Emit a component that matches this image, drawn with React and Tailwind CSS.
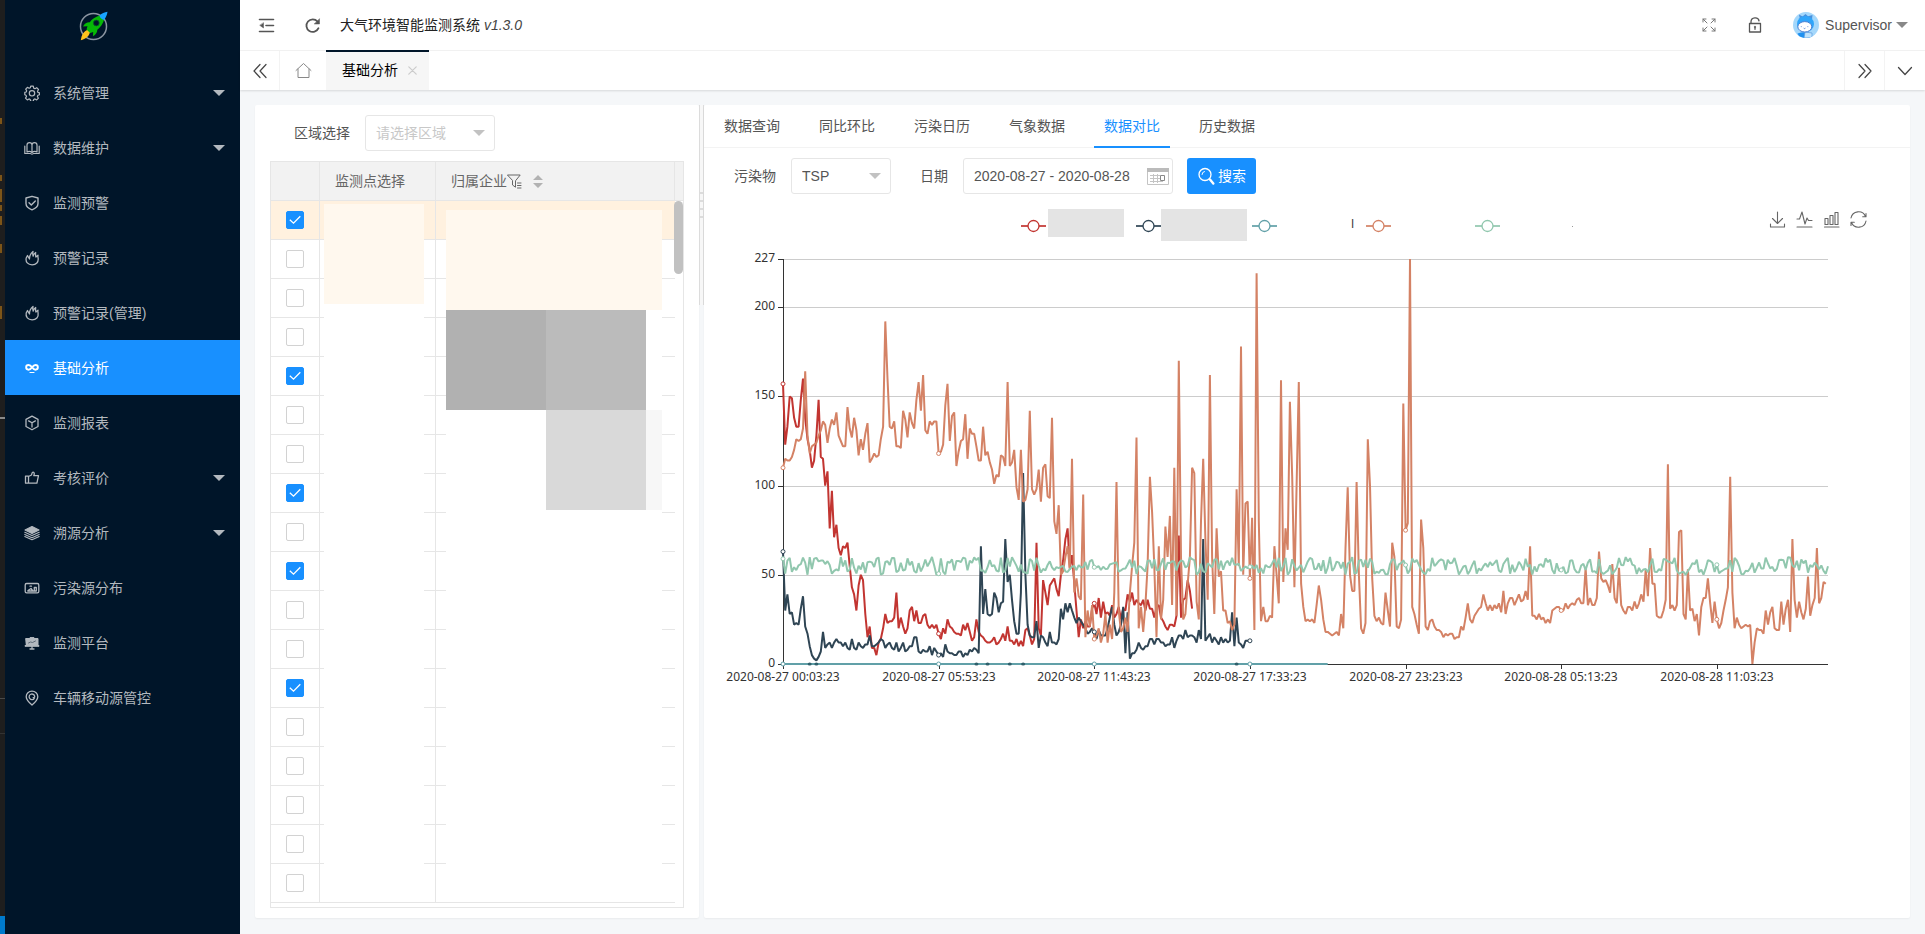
import React from "react";

/* ---------- icons ---------- */

function Icon({ size = 16, box = 16, width = 1.2, children, className = "" }) {
  return (
    <svg
      width={size}
      height={size}
      viewBox={`0 0 ${box} ${box}`}
      fill="none"
      stroke="currentColor"
      strokeWidth={width}
      strokeLinecap="round"
      strokeLinejoin="round"
      className={`shrink-0 ${className}`}
      aria-hidden="true"
    >
      {children}
    </svg>
  );
}

const Gear = () => (
  <Icon>
    <path d="M6.7 1.2h2.6l.4 1.9 1.3.6 1.7-1 1.8 1.8-1 1.7.5 1.2 1.5.5v1.9l-1.6.5-.5 1.2 1 1.7-1.7 1.7-1.7-1-1.3.6-.4 1.8H6.7l-.5-1.8-1.2-.6-1.7 1-1.8-1.8 1-1.6-.5-1.3L.8 9.700V7.400l1.400-.4.500-1.200-1-1.700 1.700-1.800 1.700 1 1.200-.5z" />
    <circle cx="8" cy="8.300" r="2.700" />
  </Icon>
);
const Book = () => (
  <Icon>
    <path d="M3 12V5c0-1.500 1-2.300 2.500-2.300S8 3.500 8 5c0-1.500 1-2.300 2.500-2.300S13 3.500 13 5v7c-1.800-.9-3.600-.6-5 .5-1.400-1.100-3.200-1.400-5-.5zM8 5v7.500M.8 6v7.500h5.700c.5.700 2.500.7 3 0h5.700V6" />
  </Icon>
);
const Shield = () => (
  <Icon width={1.4}>
    <path d="M8 1.300 14 3v5.500c0 3-2.500 5-6 6.300-3.500-1.300-6-3.300-6-6.300V3zM5 7.700l2.300 2.300L11.300 6" />
  </Icon>
);
const Fire = () => (
  <Icon width={1.3}>
    <path d="M5.500 9C5.300 6 6.300 3.700 9 1.500c-.4 1.800-.3 3.300.2 4.700.2-1.400 1-2.700 2.500-3.700-.3 1.700-.2 3 .2 4.500L14 5.200c-.3 1-.1 1.700.1 2.800.7 4.300-2 6.800-6 6.800-4.200 0-6.700-2.700-5.900-6.800L3.500 5.500c.6 1 1.100 2.200 2 3.500z" />
  </Icon>
);
const Infinity = () => (
  <Icon width={1.9}>
    <path d="M8 7.300C6.800 5.500 5.800 5 4.500 5a2.300 2.300 0 0 0 0 4.700C6 9.700 7 8.600 8 7.300s2-2.300 3.500-2.300a2.300 2.300 0 0 1 0 4.700C10.200 9.700 9.200 9 8 7.300z" />
    <path d="M6 12.500h4" strokeWidth="1.200" />
  </Icon>
);
const Cube = () => (
  <Icon width={1.3}>
    <path d="M8 1.200 14 4.300v7.200L8 14.800 2 11.500V4.300zM4.600 5.900 8 7.800l3.400-1.900M8 7.800v4.200" />
  </Icon>
);
const Thumb = () => (
  <Icon width={1.3}>
    <path d="M1.500 6.200h3v7h-3zM4.500 6.500 7.500 5c.6-1.400.3-2.900 1.600-2.900 1.400 0 1.400 1.900.7 3.600h4.700l-1.600 7.500H4.500" />
  </Icon>
);
const Layers = () => (
  <Icon width={1.1}>
    <path d="M8 1.500 15 5 8 8.500 1 5z" fill="currentColor" />
    <path d="M.8 7.200 8 10.600l7.200-3.400M.8 9.400 8 12.700l7.200-3.300M.8 11.500 8 14.800l7.200-3.300" />
  </Icon>
);
const Photo = () => (
  <Icon width={1.3}>
    <rect x="1.200" y="3.500" width="13.600" height="9.400" rx="1.400" />
    <path d="M3.800 11h8.500V7.500h-2v3M4 10.500l3-2 1.500 2M6 6.200h1.500" />
  </Icon>
);
const Board = () => (
  <Icon width={1}>
    <path d="M2 3.500h4V2.600h4v.9h4v7h1v.8H1v-.8h1z" fill="currentColor" />
    <path d="M8 11v2.800M6 14h4" strokeWidth="1.300" />
    <path d="m4.500 8 2-1L8.500 7.500l3-1.500" stroke="#4a5866" strokeWidth=".8" />
  </Icon>
);
const Pin = () => (
  <Icon width={1.300}>
    <path d="M8 15C4.500 12 2.200 9.500 2.200 6.700a5.800 5.500 0 0 1 11.600 0C13.800 9.500 11.500 12 8 15z" />
    <path d="M10.300 8.300a2.800 2.800 0 1 1 .4-1.800c0 1-.8 1.400-1.500 1.100" />
  </Icon>
);

const Caret = ({ className = "" }) => (
  <svg width="12" height="6" viewBox="0 0 12 6" className={`shrink-0 ${className}`} aria-hidden="true">
    <path d="M0 0h12L6 6z" fill="currentColor" />
  </svg>
);

const Logo = () => (
  <svg width="30" height="30" viewBox="0 0 30 30" aria-hidden="true">
    <circle cx="14.500" cy="15.500" r="13" fill="none" stroke="#8b95a1" strokeWidth="1.500" />
    <path d="M9.500 18.500C4 20.500 2.500 24.500 1.800 29.200c4.700-1.500 8.400-3.700 9.200-8.300z" fill="#ffc21c" />
    <path d="M20.500 4.500c-4 1.200-7.800 3.700-9.700 6.800-2.500-.3-5 1-6.800 4.200l4.500-.3-1 3.300 3.700 3.500 3-1-.3 4.200c3-1.600 4.400-3.900 4.400-6.500 3-2.300 5.600-6 6.700-9.800z" fill="#06b806" />
    <path d="M28.500.8c-3 .4-5.700 1.700-8 3.700.2 2 2 4 4.500 4.400 2-2.400 3.100-5.100 3.500-8.100z" fill="#18a4ff" />
    <circle cx="17.300" cy="12" r="2.900" fill="#001529" stroke="#075d24" strokeWidth=".8" />
  </svg>
);

const Avatar = () => (
  <svg width="26" height="26" viewBox="0 0 26 26" className="shrink-0" aria-hidden="true">
    <defs>
      <clipPath id="avatar-clip">
        <circle cx="13" cy="13" r="13" />
      </clipPath>
    </defs>
    <g clipPath="url(#avatar-clip)">
      <rect width="26" height="26" fill="#a4d7fb" />
      <path d="m6 2.500 3.500 2 3-2.500 2.500 2.300 4.500-1.300-.5 4-12 1z" fill="#4a90dc" />
      <ellipse cx="12.500" cy="12" rx="8.500" ry="8" fill="#2fa5fa" />
      <path d="M4.500 21.500c5-1.800 11-1.500 14.500.5v4H7z" fill="#1e90f0" />
      <path d="m12 20 7 1v5h-8z" fill="#bfe2fb" stroke="#5a9be0" strokeWidth=".7" />
      <ellipse cx="11.800" cy="14.800" rx="7" ry="5.200" fill="#fff" stroke="#4c7fd0" strokeWidth="1" />
      <path d="M8.300 14.300v.8M14.800 14.300v.8M10.700 16.200c.5.500 1.200.5 1.700 0" stroke="#4c7fd0" strokeWidth=".9" fill="none" />
    </g>
  </svg>
);

/* ---------- sidebar ---------- */

const MENU = [
  { label: "系统管理", icon: Gear, sub: true },
  { label: "数据维护", icon: Book, sub: true },
  { label: "监测预警", icon: Shield },
  { label: "预警记录", icon: Fire },
  { label: "预警记录(管理)", icon: Fire },
  { label: "基础分析", icon: Infinity, active: true },
  { label: "监测报表", icon: Cube },
  { label: "考核评价", icon: Thumb, sub: true },
  { label: "溯源分析", icon: Layers, sub: true },
  { label: "污染源分布", icon: Photo },
  { label: "监测平台", icon: Board },
  { label: "车辆移动源管控", icon: Pin },
];

function EdgeStrip() {
  return (
    <div className="relative w-[5px] shrink-0 bg-[#1e1e1e]" aria-hidden="true">
      <i className="absolute left-0 top-[118px] h-[6px] w-[2px] bg-[#7d5518]" />
      <i className="absolute left-0 top-[175px] h-[6px] w-[2px] bg-[#7d5518]" />
      <i className="absolute left-0 top-[189px] h-[13px] w-[2px] bg-[#7d5518]" />
      <i className="absolute left-0 top-[205px] h-[6px] w-[2px] bg-[#7d5518]" />
      <i className="absolute left-0 top-[216px] h-[9px] w-[2px] bg-[#7d5518]" />
      <i className="absolute left-0 top-[244px] h-[9px] w-[2px] bg-[#7d5518]" />
      <i className="absolute left-0 top-[306px] h-[13px] w-[2px] bg-[#7d5518]" />
      <i className="absolute left-0 top-[417px] h-[2px] w-[5px] bg-[#8a8a8a]" />
      <i className="absolute left-0 top-[698px] h-px w-[5px] bg-[#4a4a4a]" />
      <i className="absolute left-0 top-[733px] h-px w-[5px] bg-[#333333]" />
      <i className="absolute bottom-0 left-0 h-[18px] w-[5px] bg-[#007acc]" />
    </div>
  );
}

function Sidebar() {
  return (
    <aside className="w-[235px] shrink-0 bg-[#001529]">
      <div className="flex h-[65px] items-start pl-[74px] pt-[11px]">
        <Logo />
      </div>
      <nav>
        {MENU.map(({ label, icon: Glyph, sub, active }) => (
          <a
            key={label}
            href="#"
            className={
              active
                ? "flex h-[55px] items-center bg-[#1890ff] pl-[19px] pr-[15px] text-sm text-white"
                : "flex h-[55px] items-center pl-[19px] pr-[15px] text-sm text-[#b3b9bf]"
            }
          >
            <Glyph />
            <span className="ml-[13px] flex-1">{label}</span>
            {sub && <Caret />}
          </a>
        ))}
      </nav>
    </aside>
  );
}

/* ---------- header ---------- */

function Header() {
  return (
    <header className="flex h-[51px] items-center border-b border-[#f3f3f3] bg-white pl-[18px] pr-[17px] text-[#555]">
      <button type="button" aria-label="收起菜单" className="mr-[29px]">
        <Icon size={17} box={17} width={1.600}>
          <path d="M1.500 2.500h14M8 8.500h7.500M1.500 14.500h14" />
          <path d="M5.500 6v5L2 8.500z" fill="currentColor" strokeWidth=".5" />
        </Icon>
      </button>
      <button type="button" aria-label="刷新" className="mr-[19px]">
        <Icon size={17} box={17} width={1.800}>
          <path d="M14.500 11.200A6.300 6.300 0 1 1 13.500 4.500" />
          <path d="M15.500 2v5h-5z" fill="currentColor" strokeWidth=".5" />
        </Icon>
      </button>
      <h1 className="text-sm text-[#222]">
        大气环境智能监测系统 <em className="text-[#444]">v1.3.0</em>
      </h1>
      <div className="ml-auto flex items-center">
        <button type="button" aria-label="全屏" className="mr-[31px] text-[#777]">
          <Icon size={14} box={14} width={1}>
            <path d="M1 4V1h3M1 1l4 4M10 1h3v3M13 1 9 5M1 10v3h3M1 13l4-4M13 10v3h-3M13 13 9 9" />
          </Icon>
        </button>
        <button type="button" aria-label="锁屏" className="mr-[30px]">
          <Icon size={16} box={16} width={1.300}>
            <path d="M2.500 6.500h11v8.500h-11zM4 6.500V4.800c0-5 7.500-5 8-.9M8 9.500v2.800M7.500 10h1" />
          </Icon>
        </button>
        <button type="button" className="flex items-center text-sm text-[#555]">
          <Avatar />
          <span className="ml-[6px]">Supervisor</span>
          <Caret className="ml-[4px] text-[#888]" />
        </button>
      </div>
    </header>
  );
}

function TabBar() {
  return (
    <div className="relative flex h-[39px] items-stretch bg-white text-[#444] shadow-[0_1px_2px_rgba(0,0,0,0.12)]">
      <button type="button" aria-label="向左" className="grid w-[40px] place-items-center border-r border-[#f3f3f3]">
        <Icon size={16} box={16}>
          <path d="M8 1.500 2 8l6 6.500M14 1.500 8 8l6 6.500" />
        </Icon>
      </button>
      <button type="button" aria-label="主页" className="grid w-[46px] place-items-center text-[#888]">
        <Icon size={17} box={17} width={1}>
          <path d="M1 8.500 8.500 1.500 16 8.500M3 7v8.500h11V7" />
        </Icon>
      </button>
      <div className="-mt-px flex items-center border-t-2 border-[#001529] bg-[#f6f6f6] pb-[2px] pl-[16px] pr-[12px] text-sm text-black">
        基础分析
        <button type="button" aria-label="关闭" className="ml-[10px] text-[#ccc]">
          <Icon size={9} box={9}>
            <path d="m.8.8 7.400 7.400M8.200.8.800 8.200" />
          </Icon>
        </button>
      </div>
      <button type="button" aria-label="向右" className="ml-auto grid w-[40px] place-items-center border-l border-[#f3f3f3]">
        <Icon size={16} box={16}>
          <path d="m2 1.500 6 6.500-6 6.500M8 1.500 14 8l-6 6.500" />
        </Icon>
      </button>
      <button type="button" aria-label="更多" className="grid w-[41px] place-items-center border-l border-[#f3f3f3]">
        <Icon size={16} box={16} width={1.300}>
          <path d="m1.500 4.500 6.500 7 6.500-7" />
        </Icon>
      </button>
    </div>
  );
}

/* ---------- station list ---------- */

const ROWS = 18;
const CHECKED = [0, 4, 7, 9, 12];

function StationTable() {
  return (
    <div className="relative border border-[#e6e6e6] pb-[4px]">
      <table className="w-full table-fixed border-separate border-spacing-0 text-sm text-[#666]">
        <colgroup>
          <col className="w-[49px]" />
          <col className="w-[116px]" />
          <col />
          <col className="w-[8px]" />
        </colgroup>
        <thead className="bg-[#f2f2f2]">
          <tr className="h-[39px]">
            <th className="border-b border-r border-[#e6e6e6]" aria-label="选择" />
            <th className="border-b border-r border-[#e6e6e6] pl-[15px] text-left font-normal">监测点选择</th>
            <th className="border-b border-r border-[#e6e6e6] pl-[15px] text-left font-normal">
              <span className="flex items-center">
                归属企业
                <Icon size={15} box={15} width={1}>
                  <path d="M.8 1h12.400L8.500 6.800v6.400L5.500 11V6.800zM10.500 9h3.500M10.500 11.500h3.500M10.500 14h3.500" />
                </Icon>
                <svg width="10" height="13" viewBox="0 0 10 13" className="ml-[11px]" aria-hidden="true">
                  <path d="M5 0l5 5H0zM5 13L0 8h10z" fill="#b2b2b2" />
                </svg>
              </span>
            </th>
            <th className="border-b border-[#e6e6e6]" aria-hidden="true" />
          </tr>
        </thead>
        <tbody>
          {Array.from({ length: ROWS }, (_, r) => (
            <tr key={r} className={r === 0 ? "h-[39px] bg-[#fff1df]" : "h-[39px] bg-white"}>
              <td className="border-b border-r border-[#e6e6e6] p-0">
                <label className="relative mx-auto block size-[18px]">
                  <input
                    type="checkbox"
                    aria-label={`第${r + 1}行`}
                    defaultChecked={CHECKED.includes(r)}
                    className="peer block size-[18px] appearance-none rounded-[2px] border border-[#d2d2d2] bg-white checked:border-[#1890ff] checked:bg-[#1890ff]"
                  />
                  <svg
                    viewBox="0 0 18 18"
                    className="pointer-events-none absolute inset-0 hidden size-[18px] peer-checked:block"
                    fill="none"
                    stroke="#fff"
                    strokeWidth="1.300"
                  >
                    <path d="m3.800 8.800 3.700 3.400L14.300 5.300" />
                  </svg>
                </label>
              </td>
              <td className="border-b border-r border-[#e6e6e6]" />
              <td className="border-b border-[#e6e6e6]" />
              <td className="bg-white" />
            </tr>
          ))}
        </tbody>
      </table>
      {/* masked cells */}
      <div className="absolute bottom-[7px] left-[53px] top-[42px] w-[100px] bg-white">
        <div className="h-[100px] bg-[#fff8ee]" />
      </div>
      <div className="absolute bottom-[7px] left-[175px] top-[48px] w-[216px] bg-white">
        <div className="h-[100px] bg-[#fff8ee]" />
        <div className="flex h-[100px]">
          <div className="w-[100px] bg-[#b1b1b1]" />
          <div className="w-[100px] bg-[#bbbbbb]" />
        </div>
        <div className="flex h-[100px]">
          <div className="ml-[100px] w-[100px] bg-[#d9d9d9]" />
          <div className="flex-1 bg-[#f7f7f7]" />
        </div>
      </div>
      <div className="absolute right-0 top-[39px] h-[73px] w-[9px] rounded-full bg-[#c1c1c1]" />
    </div>
  );
}

function StationPanel() {
  return (
    <section className="w-[444px] shrink-0 rounded-[2px] bg-white px-[15px] py-[10px] shadow-[0_1px_2px_rgba(0,0,0,0.05)]">
      <div className="mb-[10px] flex items-center pl-[24px] text-sm">
        <label htmlFor="area" className="mr-[15px] text-[#555]">
          区域选择
        </label>
        <span className="relative w-[130px]">
          <select
            id="area"
            defaultValue=""
            className="block h-[36px] w-full appearance-none rounded-[3px] border border-[#e6e6e6] bg-white px-[10px] text-[#c8c8c8]"
          >
            <option value="">请选择区域</option>
          </select>
          <Caret className="pointer-events-none absolute right-[10px] top-[15px] text-[#c2c2c2]" />
        </span>
      </div>
      <StationTable />
    </section>
  );
}

function Splitter() {
  return (
    <div className="w-[5px] shrink-0" aria-hidden="true">
      <div className="flex h-[200px] flex-col items-stretch gap-[6px] border-x border-[#dcdcdc] bg-[#f7f7f7] pt-[87px]">
        <i className="h-[2px] bg-[#dcdcdc]" />
        <i className="h-[2px] bg-[#dcdcdc]" />
        <i className="h-[2px] bg-[#dcdcdc]" />
        <i className="h-[2px] bg-[#dcdcdc]" />
      </div>
    </div>
  );
}

/* ---------- chart ---------- */

const parse = (text) => text.trim().split(/\s+/).map(Number);

// One reading every five minutes, beginning at 2020-08-27 00:03:23.
const RED = parse(`
157 123 133 150 149 138 133 133 148 160 138 126 120 110 114 128 148 116 115 100 108 76 97 71 78 65 61 66 65 68
55 43 39 30 44 50 47 28 15 21 9 9 5 12 14 20 28 23 24 24 26 40 20 26 21 17 20 30 32 24
30 23 23 27 28 22 20 22 20 22 17 14 20 17 25 21 20 18 17 17 16 22 19 23 18 13 15 25 18 16
15 13 12 12 13 15 11 12 14 17 13 21 13 13 11 14 10 13 10 19 20 16 11 14 68 20 16 47 40 33
44 46 48 42 38 50 58 70 76 54 61 45 30 15 25 20 24 21 21 31 34 28 37 26 35 28 29 27 33 26
28 32 25 31 30 39 35 40 33 36 34 33 36 30 36 31 31 26 32 33 26 24 21 19 22 22 21 27 72 26
36 37 47 41 31`);

const NAVY = parse(`
63 30 39 28 29 22 23 22 31 38 21 17 10 5 3 2 4 7 18 9 11 12 9 12 14 12 12 10 12 9
8 14 9 8 12 10 9 11 11 16 10 10 11 12 14 13 9 11 12 9 8 12 7 9 12 7 8 10 10 15
15 7 6 8 7 7 10 5 9 7 5 6 4 11 7 6 6 5 5 7 7 4 6 5 8 7 9 8 6 66
28 42 28 27 28 40 37 29 34 35 70 46 50 36 24 17 17 40 107 50 22 16 15 15 24 9 16 15 12 10
18 12 12 11 14 31 25 34 29 34 30 26 23 26 24 22 20 17 18 20 18 14 19 16 16 16 20 26 32 22
16 18 22 32 6 29 3 6 6 8 12 9 8 10 10 14 14 11 14 14 12 12 10 11 11 15 9 13 16 16
14 19 15 16 16 15 12 19 14 70 13 15 17 12 15 13 11 15 12 14 12 13 29 10 26 12 11 9 13 13 13`);

const ORANGE = parse(`
110 115 114 114 116 120 126 125 126 132 164 128 118 122 123 124 128 131 136 134 124 132 137 134 141 128 125 122 122 144
132 127 138 131 117 126 120 129 135 113 115 118 116 117 126 133 192 160 133 132 136 122 122 121 142 137 127 141 135 132
148 158 142 162 131 129 136 134 136 136 118 119 123 145 157 125 139 141 111 119 125 126 140 115 132 129 129 122 114 114
133 117 119 113 109 101 106 105 117 116 111 158 111 113 120 99 92 120 91 92 98 142 98 95 98 109 91 110 112 94
93 138 80 73 89 50 52 60 66 53 115 40 48 38 36 95 15 30 21 33 14 16 20 12 17 28 12 22 14 40
102 30 18 20 26 18 40 55 68 127 20 32 18 33 55 105 85 55 15 66 25 36 77 60 83 33 110 27 170 60
25 28 45 60 110 107 35 25 80 115 70 36 162 60 28 76 49 52 30 30 23 24 19 22 98 55 178 50 90 91
48 82 19 219 80 24 32 24 24 27 26 66 50 34 159 46 76 64 147 105 43 100 158 45 32 24 25 24 25 23
33 44 36 25 18 18 17 16 17 18 16 28 20 65 99 50 41 41 102 50 20 17 23 126 100 48 27 24 26 23
22 40 30 21 68 60 21 20 25 146 75 79 227 32 28 22 17 81 65 21 19 24 25 21 19 19 18 15 17 16
17 17 14 15 15 21 19 26 34 25 23 27 29 31 32 39 34 30 33 30 33 31 34 29 41 28 34 37 37 33
36 39 35 36 41 36 66 27 27 25 28 25 26 23 25 23 30 31 32 32 30 30 34 31 33 34 33 36 37 34
34 54 33 37 33 33 37 63 48 46 47 44 40 56 37 34 54 33 30 28 32 32 30 35 31 34 39 35 53 38
65 45 45 27 26 26 30 36 112 31 33 30 33 74 75 28 25 53 30 31 24 28 16 32 37 37 48 34 23 35
25 20 23 30 36 43 105 40 20 26 22 20 21 22 21 22 0 12 20 19 19 17 30 22 29 32 20 19 19 35
22 31 36 18 70 36 26 35 29 25 31 49 27 33 37 65 34 37 46 45`);

// The background station hovers between 50 and 60 for the whole period.
const MINT = (() => {
  const out = [59];
  let seed = 20200827;
  for (let i = 1; i <= 470; i += 1) {
    seed = (seed * 48271) % 2147483647;
    const target = 50 + (seed / 2147483647) * 10;
    out.push(i % 5 === 0 ? (out[i - 1] + target) / 2 : target);
  }
  return out;
})();

const TEAL = Array.from({ length: 246 }, () => 0);

const SERIES = [
  { color: "#c23531", values: RED },
  { color: "#2f4554", values: NAVY },
  { color: "#61a0a8", values: TEAL },
  { color: "#d48265", values: ORANGE },
  { color: "#91c7ae", values: MINT },
];

const PLOT = { left: 79, top: 16, width: 1045, height: 405, slots: 470, max: 227 };
const px = (slot) => PLOT.left + (slot / PLOT.slots) * PLOT.width;
const py = (value) => PLOT.top + PLOT.height * (1 - value / PLOT.max);

const Y_TICKS = [0, 50, 100, 150, 200, 227];
const X_TICKS = [
  "2020-08-27 00:03:23",
  "2020-08-27 05:53:23",
  "2020-08-27 11:43:23",
  "2020-08-27 17:33:23",
  "2020-08-27 23:23:23",
  "2020-08-28 05:13:23",
  "2020-08-28 11:03:23",
];

function Chart() {
  const bottom = PLOT.top + PLOT.height;
  return (
    <svg viewBox="0 0 1206 450" className="block w-full" role="img" aria-label="数据对比">
      <g shapeRendering="crispEdges">
        {Y_TICKS.slice(1).map((v) => (
          <rect key={v} x={PLOT.left} y={Math.round(py(v))} width={PLOT.width} height="1" fill="#ccc" />
        ))}
        <rect x={PLOT.left} y={PLOT.top} width="1" height={PLOT.height} fill="#333" />
        <rect x={PLOT.left} y={bottom} width={PLOT.width} height="1" fill="#333" />
        {Y_TICKS.map((v) => (
          <rect key={v} x={PLOT.left - 5} y={Math.round(py(v))} width="5" height="1" fill="#333" />
        ))}
        {X_TICKS.map((t, i) => (
          <rect key={t} x={Math.round(px(i * 70))} y={bottom} width="1" height="5" fill="#333" />
        ))}
      </g>
      <g fontSize="12" fill="#333" fontFamily='"Noto Sans", sans-serif'>
        {Y_TICKS.map((v) => (
          <text key={v} x={PLOT.left - 8} y={Math.round(py(v)) + 3} textAnchor="end">
            {v}
          </text>
        ))}
        {X_TICKS.map((t, i) => (
          <text key={t} x={Math.round(px(i * 70))} y={bottom + 17} textAnchor="middle">
            {t}
          </text>
        ))}
      </g>
      {SERIES.map(({ color, values }) => (
        <polyline
          key={color}
          fill="none"
          stroke={color}
          strokeWidth="2"
          strokeLinejoin="bevel"
          points={values.map((v, i) => `${px(i).toFixed(1)},${py(v).toFixed(1)}`).join(" ")}
        />
      ))}
      {[12, 15, 87, 92, 102, 108, 204].map((slot) => (
        <ellipse key={slot} cx={px(slot)} cy={bottom} rx="2" ry="1.500" fill="#2f5f6b" />
      ))}
      {SERIES.map(({ color, values }) => (
        <g key={color} stroke={color} fill="#fff">
          {values.map((v, i) =>
            i % 70 === 0 && i <= 420 ? <circle key={i} cx={px(i)} cy={py(v)} r="2" /> : null
          )}
        </g>
      ))}
    </svg>
  );
}

function LegendMark({ color }) {
  return (
    <svg width="25" height="14" viewBox="0 0 25 14" className="shrink-0" aria-hidden="true">
      <path d="M0 7h25" stroke={color} strokeWidth="2" opacity=".85" />
      <circle cx="12.500" cy="7" r="5.500" fill="#fff" stroke={color} strokeWidth="1.300" />
    </svg>
  );
}

function Legend() {
  return (
    <div className="flex h-[44px] items-center justify-center pt-[2px]">
      <LegendMark color="#c23531" />
      <span className="mb-[6px] ml-[2px] h-[28px] w-[76px] bg-[#e4e4e4]" />
      <span className="ml-[12px]" />
      <LegendMark color="#2f4554" />
      <span className="mb-[2px] h-[32px] w-[86px] bg-[#e4e4e4]" />
      <span className="ml-[5px]" />
      <LegendMark color="#61a0a8" />
      <span className="mb-[4px] w-[89px] pr-[12px] text-right text-xs text-[#333]">l</span>
      <LegendMark color="#d48265" />
      <span className="w-[84px]" />
      <LegendMark color="#91c7ae" />
      <span className="ml-[72px] size-px bg-[#999]" />
      <span className="w-[20px]" />
    </div>
  );
}

function Toolbox() {
  return (
    <div className="absolute right-[43px] top-[8px] flex gap-[10px] text-[#666]">
      <button type="button" aria-label="下载">
        <Icon size={17} box={17} width={1.100}>
          <path d="M8.500 1v11M3.500 7.500l5 5 5-5M1.500 13v3h14v-3" />
        </Icon>
      </button>
      <button type="button" aria-label="折线图">
        <Icon size={17} box={17} width={1.100}>
          <path d="M1 8h2.500L6 1l3 12 2-6 1.500 2.500H16M1 16h15" />
        </Icon>
      </button>
      <button type="button" aria-label="柱状图">
        <Icon size={17} box={17} width={1.100}>
          <path d="M2 7.500h3v6H2zM7 4.500h3v9H7zM12 1.500h3v12h-3zM1.500 16h14.500" />
        </Icon>
      </button>
      <button type="button" aria-label="还原">
        <Icon size={17} box={17} width={1.100}>
          <path d="M1 7A7.600 7.600 0 0 1 15.500 5.500M16 2.500v3.300h-3.300M16 10A7.600 7.600 0 0 1 1.500 11.500M1 14.500v-3.300h3.300" />
        </Icon>
      </button>
    </div>
  );
}

/* ---------- analysis panel ---------- */

const TABS = ["数据查询", "同比环比", "污染日历", "气象数据", "数据对比", "历史数据"];

function AnalysisPanel() {
  return (
    <section className="min-w-0 flex-1 rounded-[2px] bg-white text-sm text-[#555] shadow-[0_1px_2px_rgba(0,0,0,0.05)]">
      <nav className="flex h-[43px] gap-[19px] border-b border-[#f3f3f3] pl-[10px]">
        {TABS.map((t) => (
          <a
            key={t}
            href="#"
            className={
              t === "数据对比"
                ? "-mb-px flex h-[43px] items-center border-b-2 border-[#1890ff] px-[10px] text-[#1890ff]"
                : "-mb-px flex h-[43px] items-center border-b-2 border-transparent px-[10px]"
            }
          >
            {t}
          </a>
        ))}
      </nav>
      <form className="flex items-center pl-[30px] pt-[10px]" onSubmit={(e) => e.preventDefault()}>
        <label htmlFor="pollutant" className="mr-[15px]">
          污染物
        </label>
        <span className="relative w-[100px]">
          <select
            id="pollutant"
            className="block h-[36px] w-full appearance-none rounded-[3px] border border-[#e6e6e6] bg-white px-[10px]"
          >
            <option>TSP</option>
          </select>
          <Caret className="pointer-events-none absolute right-[10px] top-[15px] text-[#c2c2c2]" />
        </span>
        <label htmlFor="range" className="ml-[29px] mr-[15px]">
          日期
        </label>
        <span className="relative w-[210px]">
          <input
            id="range"
            type="text"
            defaultValue="2020-08-27 - 2020-08-28"
            className="block h-[36px] w-full rounded-[3px] border border-[#e6e6e6] pl-[10px]"
          />
          <svg
            width="22"
            height="17"
            viewBox="0 0 22 17"
            className="pointer-events-none absolute right-[4px] top-[10px]"
            fill="none"
            stroke="#c4c4c4"
            aria-hidden="true"
          >
            <path d="M.5.500h21v16H.5z" />
            <path d="M0 0h22v4H0z" fill="#bbb" stroke="none" />
            <path d="M3 7.500h10M3 10.500h10M3 13.500h13M6.500 6v9M10.500 6v9" />
            <path d="M13.500 7.500h4v5h-4z" stroke="#888" />
          </svg>
        </span>
        <button
          type="submit"
          className="ml-[14px] flex h-[36px] items-center rounded-[3px] bg-[#1890ff] px-[10px] text-white"
        >
          <Icon size={18} box={18} width={1.300} className="mr-[3px]">
            <circle cx="8" cy="7.500" r="6" />
            <path d="M5 7.500a3 3 0 0 1 2.500-3" strokeWidth="1" />
            <path d="m13 12.500 3.300 4" strokeWidth="2.400" />
          </Icon>
          搜索
        </button>
      </form>
      <div className="relative mt-[9px]">
        <Toolbox />
        <Legend />
        <div className="-mt-[4px]">
          <Chart />
        </div>
      </div>
    </section>
  );
}

export default function App() {
  return (
    <div className='flex min-h-screen font-["Liberation_Sans","Noto_Sans_CJK_SC",sans-serif]'>
      <EdgeStrip />
      <Sidebar />
      <div className="flex min-w-0 flex-1 flex-col bg-[#f5f7f9]">
        <Header />
        <TabBar />
        <main className="flex flex-1 items-stretch px-[15px] pb-[16px] pt-[15px]">
          <StationPanel />
          <Splitter />
          <AnalysisPanel />
        </main>
      </div>
    </div>
  );
}
